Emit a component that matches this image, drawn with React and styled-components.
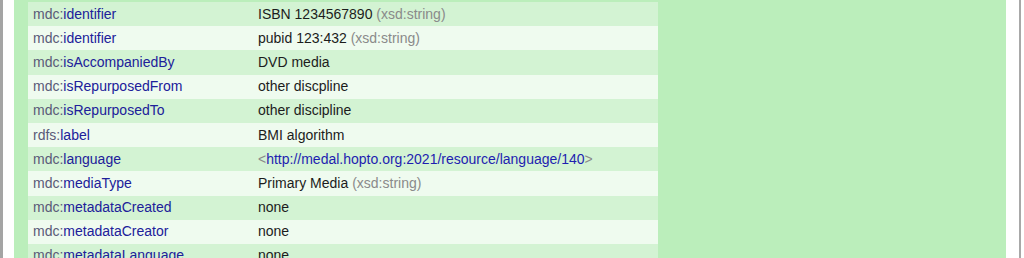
import React from "react";
import styled, { createGlobalStyle } from "styled-components";

const Global = createGlobalStyle`
  html, body {
    margin: 0;
    padding: 0;
    background: #ffffff;
    overflow: hidden;
  }
  body {
    font-family: "Liberation Sans", Arial, sans-serif;
    font-size: 14px;
  }
`;

const rows = [
  { prefix: "mdc", name: "identifier", value: "ISBN 1234567890", type: "xsd:string" },
  { prefix: "mdc", name: "identifier", value: "pubid 123:432", type: "xsd:string" },
  { prefix: "mdc", name: "isAccompaniedBy", value: "DVD media" },
  { prefix: "mdc", name: "isRepurposedFrom", value: "other discpline" },
  { prefix: "mdc", name: "isRepurposedTo", value: "other discipline" },
  { prefix: "rdfs", name: "label", value: "BMI algorithm" },
  { prefix: "mdc", name: "language", link: "http://medal.hopto.org:2021/resource/language/140" },
  { prefix: "mdc", name: "mediaType", value: "Primary Media", type: "xsd:string" },
  { prefix: "mdc", name: "metadataCreated", value: "none" },
  { prefix: "mdc", name: "metadataCreator", value: "none" },
  { prefix: "mdc", name: "metadataLanguage", value: "none" },
];

const App = () => {
  return (
    <Page>
      <Global />
      <Frame>
        <Panel>
          <Table>
            <tbody>
              {rows.map((r, i) => (
                <Row key={i} $odd={i % 2 === 0}>
                  <Prop>
                    <Prefix>{r.prefix}:</Prefix>
                    <Name>{r.name}</Name>
                  </Prop>
                  <Value>
                    {r.link ? (
                      <>
                        <Muted>&lt;</Muted>
                        <Link>{r.link}</Link>
                        <Muted>&gt;</Muted>
                      </>
                    ) : (
                      <>
                        {r.value}
                        {r.type && <Muted> ({r.type})</Muted>}
                      </>
                    )}
                  </Value>
                </Row>
              ))}
            </tbody>
          </Table>
        </Panel>
      </Frame>
    </Page>
  );
};

export default App;

const Page = styled.div`
  width: 1024px;
  height: 258px;
  overflow: hidden;
  display: flex;
  background: #ffffff;
`;

const Frame = styled.div`
  flex: none;
  width: 1021px;
  height: 258px;
  border-left: 3px solid #a4a4a4;
  border-right: 2px solid #a8a8a8;
  padding: 0 13px 0 11px;
  box-sizing: border-box;
`;

const Panel = styled.div`
  height: 100%;
  background: #bbeebb;
  padding-left: 14px;
  overflow: hidden;
`;

const Table = styled.table`
  width: 630px;
  border-collapse: collapse;
  margin-top: 2px;
`;

const Row = styled.tr`
  background: ${({ $odd }) => ($odd ? "#d3f3d3" : "#effbef")};
  height: 24.2px;
`;

const Prop = styled.td`
  width: 215px;
  padding: 0 5px;
  white-space: nowrap;
  line-height: 17px;
`;

const Value = styled.td`
  padding: 0 5px;
  color: #1c1c1c;
  white-space: nowrap;
  line-height: 17px;
`;

const Prefix = styled.span`
  color: #5a5a78;
`;

const Name = styled.span`
  color: #20209a;
`;

const Muted = styled.span`
  color: #8a8a8a;
`;

const Link = styled.span`
  color: #1e1eb0;
`;
